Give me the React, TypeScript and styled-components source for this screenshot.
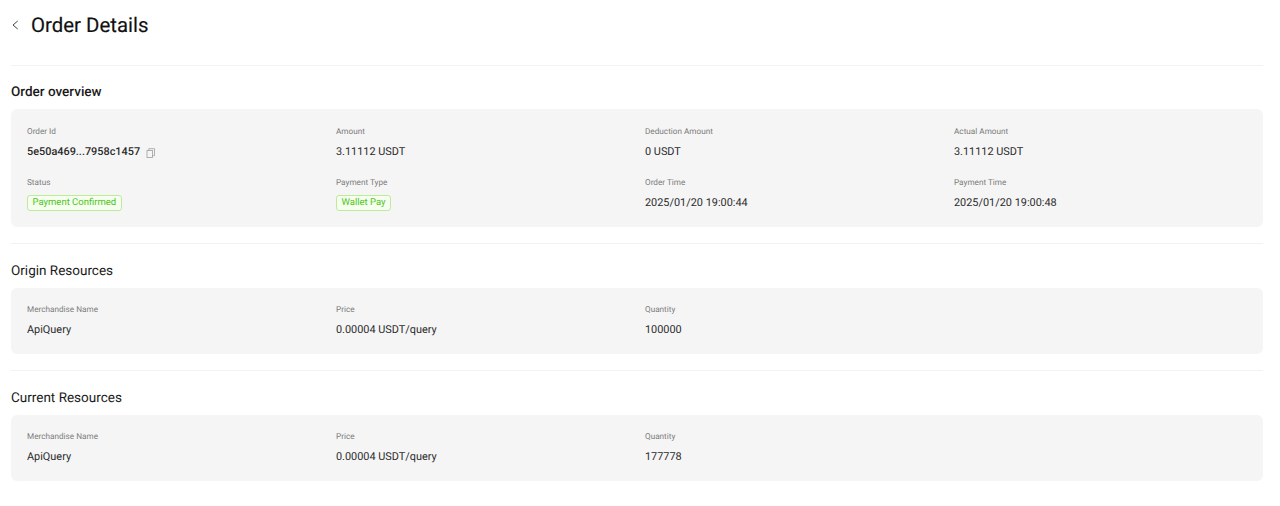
import React from "react";
import styled, { createGlobalStyle } from "styled-components";

const Global = createGlobalStyle`
  html, body { margin: 0; padding: 0; background: #fff; }
  body {
    font-family: Roboto, "Liberation Sans", sans-serif;
    color: #1a1a1a;
    text-rendering: geometricPrecision;
  }
`;
const Page = styled.div`
  padding: 0 17px 0 11px;
  display: flex;
  flex-direction: column;
`;
const Header = styled.header`
  height: 65px;
  padding-bottom: 15px;
  box-sizing: border-box;
  display: flex;
  align-items: center;
  gap: 11px;
`;
const Back = styled.button`
  border: 0;
  background: none;
  padding: 0;
  width: 9px;
  height: 12px;
  display: flex;
`;
const Title = styled.h1`
  margin: 0;
  font-size: 20.4px;
  line-height: 30px;
  font-weight: 400;
  color: #111;
  -webkit-text-stroke: 0.15px #111;
`;
const Divider = styled.hr`
  margin: 0;
  border: 0;
  height: 1px;
  background: #f2f2f2;
`;
const Section = styled.section`
  display: flex;
  flex-direction: column;
`;
const Heading = styled.h2<{ $strong?: boolean }>`
  margin: 0;
  height: ${p => (p.$strong ? "43px" : "44px")};
  box-sizing: border-box;
  padding-top: ${p => (p.$strong ? "8px" : "9px")};
  display: flex;
  align-items: center;
  font-size: 13.5px;
  font-weight: ${p => (p.$strong ? 500 : 400)};
  color: #1a1a1a;
`;
const Card = styled.div<{ $tight?: boolean }>`
  background: #f5f5f5;
  border-radius: 6px;
  padding: ${p => (p.$tight ? "14px" : "15px")} 0 16px 16px;
  display: grid;
  grid-template-columns: repeat(4, 1fr);
  row-gap: 15px;
  margin-bottom: 16px;
`;
const Cell = styled.div`
  display: flex;
  flex-direction: column;
  gap: 4px;
  align-items: flex-start;
`;
const Label = styled.div`
  font-size: 8.2px;
  line-height: 16px;
  color: #7b7b7b;
`;
const Value = styled.div`
  font-size: 10.9px;
  line-height: 16px;
  height: 16px;
  color: #2b2b2b;
  display: flex;
  align-items: center;
`;
const OrderId = styled(Value)`
  font-weight: 500;
  gap: 6px;
  svg {
    margin-top: 1px;
  }
`;
const Tag = styled.span`
  font-size: 9.5px;
  line-height: 14px;
  color: #4cc41f;
  background: #f6ffed;
  border: 1px solid #bdeb9d;
  border-radius: 3px;
  padding: 0 4.5px;
`;
const CopyIcon = () => (
  <svg width="10" height="10" viewBox="0 0 10 10" fill="none" stroke="#a8a8a8" strokeWidth="0.9">
    <rect x="1" y="2.5" width="5.5" height="7" />
    <path d="M2.8 2.5V.7h5.7v7H6.5" />
  </svg>
);
const resources = (qty: string) => (
  <>
    <Cell><Label>Merchandise Name</Label><Value>ApiQuery</Value></Cell>
    <Cell><Label>Price</Label><Value>0.00004 USDT/query</Value></Cell>
    <Cell><Label>Quantity</Label><Value>{qty}</Value></Cell>
  </>
);
export default function App() {
  return (
    <Page>
      <Global />
      <Header>
        <Back aria-label="Back">
          <svg width="9" height="12" viewBox="0 0 9 12" fill="none" stroke="#444" strokeWidth="1">
            <path d="M6.7 2 2 6l4.7 4" />
          </svg>
        </Back>
        <Title>Order Details</Title>
      </Header>
      <Divider />
      <Section>
        <Heading $strong>Order overview</Heading>
        <Card>
          <Cell><Label>Order Id</Label><OrderId>5e50a469...7958c1457<CopyIcon /></OrderId></Cell>
          <Cell><Label>Amount</Label><Value>3.11112 USDT</Value></Cell>
          <Cell><Label>Deduction Amount</Label><Value>0 USDT</Value></Cell>
          <Cell><Label>Actual Amount</Label><Value>3.11112 USDT</Value></Cell>
          <Cell><Label>Status</Label><Tag>Payment Confirmed</Tag></Cell>
          <Cell><Label>Payment Type</Label><Tag>Wallet Pay</Tag></Cell>
          <Cell><Label>Order Time</Label><Value>2025/01/20 19:00:44</Value></Cell>
          <Cell><Label>Payment Time</Label><Value>2025/01/20 19:00:48</Value></Cell>
        </Card>
      </Section>
      <Divider />
      <Section>
        <Heading>Origin Resources</Heading>
        <Card $tight>{resources("100000")}</Card>
      </Section>
      <Divider />
      <Section>
        <Heading>Current Resources</Heading>
        <Card $tight>{resources("177778")}</Card>
      </Section>
    </Page>
  );
}
